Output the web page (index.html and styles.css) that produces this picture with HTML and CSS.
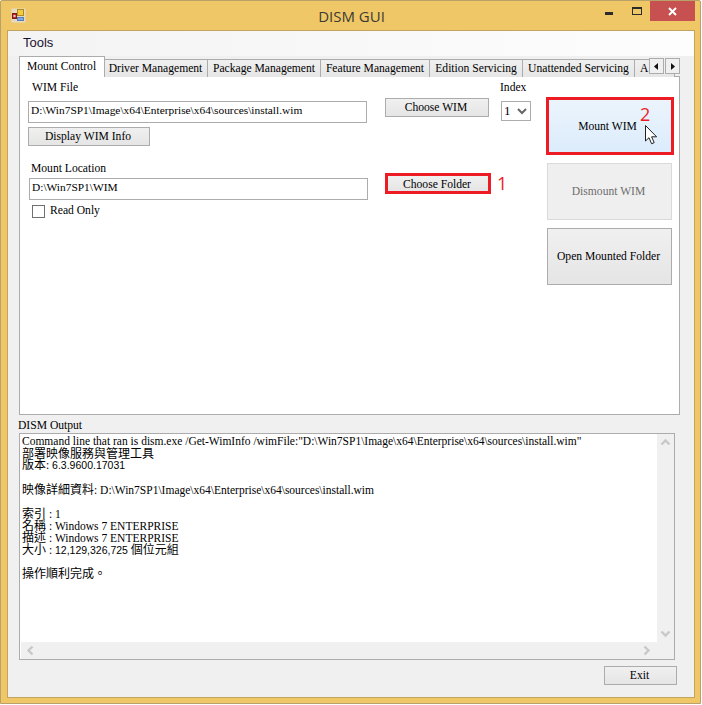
FILE: index.html
```html
<!DOCTYPE html>
<html lang="zh-Hant">
<head>
<meta charset="utf-8">
<title>DISM GUI</title>
<link rel="stylesheet" href="styles.css">
</head>
<body>
<div class="window">
  <header class="titlebar">
    <svg class="appicon" width="15" height="15" viewBox="0 0 15 15"><rect x="0.5" y="0.5" width="14" height="14" fill="#dfe3ea" opacity=".7"/><rect x="1.5" y="5.5" width="4" height="5" fill="#c4262e" stroke="#7a1d20"/><rect x="2.5" y="7" width="2" height="2" fill="#f6c7c7"/><rect x="6.5" y="1.5" width="6" height="6" fill="#f6cb3a" stroke="#b08a25"/><rect x="6.5" y="9.5" width="6" height="3" fill="#7fa6e0" stroke="#5a7fbd"/></svg>
    <div class="title">DISM GUI</div>
    <div class="controls">
      <span class="ctl"><svg width="9" height="8" viewBox="0 0 9 8"><rect width="8" height="3" fill="#2b2b2b" y="5"/></svg></span>
      <span class="ctl"><svg width="10" height="8" viewBox="0 0 10 8"><rect x=".5" y="1" width="9" height="6.5" fill="none" stroke="#2b2b2b"/><rect width="10" height="2" fill="#2b2b2b"/></svg></span>
      <span class="ctl close"><svg width="9" height="9" viewBox="0 0 9 9"><path d="M1 1 L8 8 M8 1 L1 8" stroke="#fff" stroke-width="2"/></svg></span>
    </div>
  </header>
  <div class="client">
    <nav class="menu">Tools</nav>
    <div class="tabwrap">
      <div class="tabs">
        <span class="tab active">Mount Control</span>
        <span class="tab t1">Driver Management</span>
        <span class="tab t2">Package Management</span>
        <span class="tab t3">Feature Management</span>
        <span class="tab t4">Edition Servicing</span>
        <span class="tab t5">Unattended Servicing</span>
        <span class="tab t6">A</span>
      </div>
      <div class="tabscroll">
        <span class="sbtn"><svg width="5" height="7" viewBox="0 0 5 7"><path d="M4 0 V7 L0 3.5 Z" fill="#111"/></svg></span>
        <span class="sbtn"><svg width="5" height="7" viewBox="0 0 5 7"><path d="M1 0 V7 L5 3.5 Z" fill="#111"/></svg></span>
      </div>
    </div>
    <section class="panel">
      <div class="col-left">
        <label class="lbl wim-lbl">WIM File</label>
        <div class="input">D:\Win7SP1\Image\x64\Enterprise\x64\sources\install.wim</div>
        <button class="btn info">Display WIM Info</button>
        <label class="lbl loc-lbl">Mount Location</label>
        <div class="input loc">D:\Win7SP1\WIM</div>
        <div class="check"><span class="box"></span><span class="check-text">Read Only</span></div>
      </div>
      <div class="col-mid">
        <button class="btn choose">Choose WIM</button>
        <div class="folder-wrap">
          <button class="btn choose folder">Choose Folder</button>
          <span class="mark mark1">1</span>
        </div>
      </div>
      <div class="col-index">
        <label class="lbl">Index</label>
        <div class="select"><span>1</span><svg width="10" height="7" viewBox="0 0 10 7"><path d="M1 1 L5 5 L9 1" fill="none" stroke="#666" stroke-width="2"/></svg></div>
      </div>
      <div class="col-right">
        <div class="mount-wrap">
          <button class="btn big mount">Mount WIM</button>
          <span class="mark mark2">2</span>
          <svg class="cursor" width="13" height="20" viewBox="0 0 13 20"><path d="M.5 .5 V16 L4 12.7 L6.6 18.8 L9.2 17.6 L6.6 11.8 H11.6 Z" fill="#fff" stroke="#222"/></svg>
        </div>
        <button class="btn big dis">Dismount WIM</button>
        <button class="btn big open">Open Mounted Folder</button>
      </div>
    </section>
    <div class="outlabel">DISM Output</div>
    <section class="output">
      <div class="outtext">
        <div class="ln first">Command line that ran is dism.exe /Get-WimInfo /wimFile:"D:\Win7SP1\Image\x64\Enterprise\x64\sources\install.wim"</div>
        <div class="ln"><span class="cjk">部署映像服務與管理工具</span></div>
        <div class="ln first"><span class="cjk">版本</span>: <span class="sans">6.3.9600.17031</span></div>
        <div class="ln"></div>
        <div class="ln"><span class="cjk">映像詳細資料</span>: D:\Win7SP1\Image\x64\Enterprise\x64\sources\install.wim</div>
        <div class="ln"></div>
        <div class="ln"><span class="cjk">索引</span> : 1</div>
        <div class="ln"><span class="cjk">名稱</span> : Windows 7 ENTERPRISE</div>
        <div class="ln"><span class="cjk">描述</span> : Windows 7 ENTERPRISE</div>
        <div class="ln"><span class="cjk">大小</span> : <span class="sans">12,129,326,725</span> <span class="cjk">個位元組</span></div>
        <div class="ln"></div>
        <div class="ln"><span class="cjk">操作順利完成。</span></div>
      </div>
      <div class="vbar">
        <svg width="11" height="8" viewBox="0 0 11 8"><path d="M1.5 6.5 L5.5 2.5 L9.5 6.5" fill="none" stroke="#c8c8c8" stroke-width="2.4"/></svg>
        <svg width="11" height="8" viewBox="0 0 11 8"><path d="M1.5 1.5 L5.5 5.5 L9.5 1.5" fill="none" stroke="#c8c8c8" stroke-width="2.4"/></svg>
      </div>
      <div class="hbar">
        <svg width="8" height="11" viewBox="0 0 8 11"><path d="M6.5 1.5 L2.5 5.5 L6.5 9.5" fill="none" stroke="#c8c8c8" stroke-width="2.4"/></svg>
        <svg width="8" height="11" viewBox="0 0 8 11"><path d="M1.5 1.5 L5.5 5.5 L1.5 9.5" fill="none" stroke="#c8c8c8" stroke-width="2.4"/></svg>
      </div>
      <div class="corner"></div>
    </section>
    <div class="footer"><button class="btn exit">Exit</button></div>
  </div>
</div>
</body>
</html>
```

FILE: styles.css
```css
* { box-sizing: border-box; }
html, body { margin: 0; padding: 0; background: #fff; }
body {
  width: 702px;
  height: 705px;
  overflow: hidden;
  font-family: "Liberation Serif", "Noto Sans CJK TC", serif;
  font-size: 11.6px;
  color: #000;
}
.window {
  width: 701px;
  height: 704px;
  background: #f0c766;
  border: 1px solid #b9a26a;
  border-radius: 2px 2px 0 0;
  padding: 0 5px 5px 6px;
  display: flex;
  flex-direction: column;
}
.titlebar {
  height: 29px;
  flex: none;
  display: grid;
  grid-template-columns: 1fr auto 1fr;
  align-items: start;
}
.appicon { margin: 7px 0 0 4px; display: block; }
.title {
  font-family: "Open Sans", sans-serif;
  font-size: 15px;
  line-height: 30px;
  color: #3b3a36;
  padding-left: 1px;
}
.controls {
  justify-self: end;
  display: flex;
  align-items: flex-start;
}
.ctl {
  width: 27px;
  height: 20px;
  display: flex;
  align-items: center;
  justify-content: center;
}
.close { width: 45px; background: #c75050; }
.client {
  flex: 1;
  border: 1px solid #c3a45f;
  background: #f0f0f0;
  display: flex;
  flex-direction: column;
  width: 688px;
}
.menu {
  height: 25px;
  flex: none;
  padding-left: 15px;
  line-height: 23px;
  font-family: "Liberation Sans", sans-serif;
  font-size: 13px;
  color: #1b1030;
  background: linear-gradient(90deg, #f3f3f3, #f9f9f9 60%, #fdfdfd);
}
.tabwrap {
  position: relative;
  margin-left: 11px;
  width: 661px;
  height: 21px;
  flex: none;
  z-index: 1;
}
.tabs {
  display: flex;
  align-items: flex-end;
  height: 21px;
  overflow: hidden;
}
.tab {
  flex: none;
  height: 18px;
  border: 1px solid #acacac;
  border-left-width: 0;
  border-bottom-width: 0;
  background: linear-gradient(#f0f0f0, #e6e6e6);
  line-height: 18px;
  text-align: center;
  white-space: nowrap;
  overflow: hidden;
}
.active {
  width: 86px;
  height: 21px;
  background: #fff;
  border-left-width: 1px;
  line-height: 19px;
  padding-right: 1px;
}
.t1 { width: 103px; padding-right: 1px; }
.t2 { width: 113px; }
.t3 { width: 109px; }
.t4 { width: 93px; }
.t5 { width: 112px; }
.t6 { width: 40px; text-align: left; padding-left: 5px; }
.tabscroll {
  position: absolute;
  left: 630px;
  top: 2px;
  display: flex;
  gap: 1px;
  background: #f0f0f0;
}
.sbtn {
  width: 15px;
  height: 16px;
  border: 1px solid #acacac;
  background: #f0f0f0;
  display: flex;
  align-items: center;
  justify-content: center;
}
.panel {
  margin: -1px 0 0 11px;
  width: 661px;
  height: 339px;
  flex: none;
  border: 1px solid #acacac;
  background: #fff;
  display: flex;
}
.lbl { display: block; line-height: 14px; }
.btn {
  display: block;
  padding: 0 2px 0 0;
  font: inherit;
  color: #000;
  border: 1px solid #acacac;
  background: linear-gradient(#f0f0f0, #e5e5e5);
}
.col-left { width: 348px; margin-left: 8px; flex: none; }
.wim-lbl { margin: 4px 0 0 4px; }
.input {
  width: 339px;
  height: 22px;
  margin-top: 6px;
  border: 1px solid #acacac;
  padding-left: 2px;
  line-height: 17px;
  font-size: 11.4px;
  background: #fff;
  white-space: nowrap;
}
.info { width: 122px; height: 19px; margin-top: 4px; line-height: 16px; }
.loc-lbl { margin: 16px 0 0 3px; }
.loc { margin: 2px 0 0 1px; }
.check { display: flex; align-items: center; margin: 4px 0 0 4px; line-height: 14px; gap: 5px; }
.box { width: 13px; height: 13px; border: 1px solid #707070; background: #fff; }
.col-mid { width: 115px; margin-left: 9px; flex: none; padding-top: 21px; }
.choose { width: 104px; height: 19px; }
.folder-wrap { position: relative; margin-top: 56px; width: 106px; }
.folder { width: 106px; height: 21px; outline: none; border: 3px solid #ed1c24; padding-top: 1px; }
.mark {
  position: absolute;
  font-family: "Open Sans", sans-serif;
  font-size: 18px;
  line-height: 20px;
  color: #ed1c24;
}
.mark1 { left: 112px; top: 0; }
.col-index { width: 46px; flex: none; padding-top: 4px; }
.select {
  width: 30px;
  height: 20px;
  margin: 6px 0 0 1px;
  border: 1px solid #acacac;
  display: flex;
  align-items: center;
  justify-content: space-between;
  padding: 0 3px 0 2px;
  font-size: 13px;
  background: #fff;
}
.col-right { width: 128px; flex: none; padding-top: 20px; }
.mount-wrap { position: relative; width: 128px; height: 58px; }
.big { width: 125px; height: 57px; margin-left: 1px; }
.mount {
  width: 128px;
  height: 58px;
  margin-left: 0;
  border: 3px solid #ed1c24;
  background: linear-gradient(#ebf4fc, #dcecfc);
  padding-right: 5px;
  padding-top: 1px;
}
.mark2 { left: 94px; top: 7px; }
.cursor { position: absolute; left: 99px; top: 28px; }
.dis { margin-top: 8px; color: #6d6d6d; background: #efefef; border-color: #d9d9d9; }
.open { margin-top: 8px; background: linear-gradient(#f0f0f0, #e5e5e5); }
.outlabel {
  margin-left: 10px;
  height: 18px;
  flex: none;
  line-height: 21px;
}
.output {
  margin-left: 11px;
  width: 656px;
  height: 227px;
  flex: none;
  border: 1px solid #acacac;
  background: #fff;
  display: grid;
  grid-template-columns: 1fr 17px;
  grid-template-rows: 1fr 17px;
}
.outtext {
  overflow: hidden;
  padding: 2px 0 0 2px;
  font-size: 11.5px;
}
.ln { height: 12px; line-height: 12px; white-space: pre; }
.first { line-height: 10px; }
.cjk { font-size: 12px; }
.sans { font-family: "Liberation Sans", sans-serif; font-size: 10.5px; }
.vbar, .hbar, .corner { background: #f0f0f0; }
.vbar {
  display: flex;
  flex-direction: column;
  align-items: center;
  justify-content: space-between;
  padding: 4px 0;
}
.hbar {
  margin-left: 1px;
  display: flex;
  align-items: center;
  justify-content: space-between;
  padding: 0 6px 0 5px;
}
.footer {
  display: flex;
  justify-content: flex-end;
  padding: 6px 17px 0 0;
}
.exit { width: 73px; height: 19px; }
```
